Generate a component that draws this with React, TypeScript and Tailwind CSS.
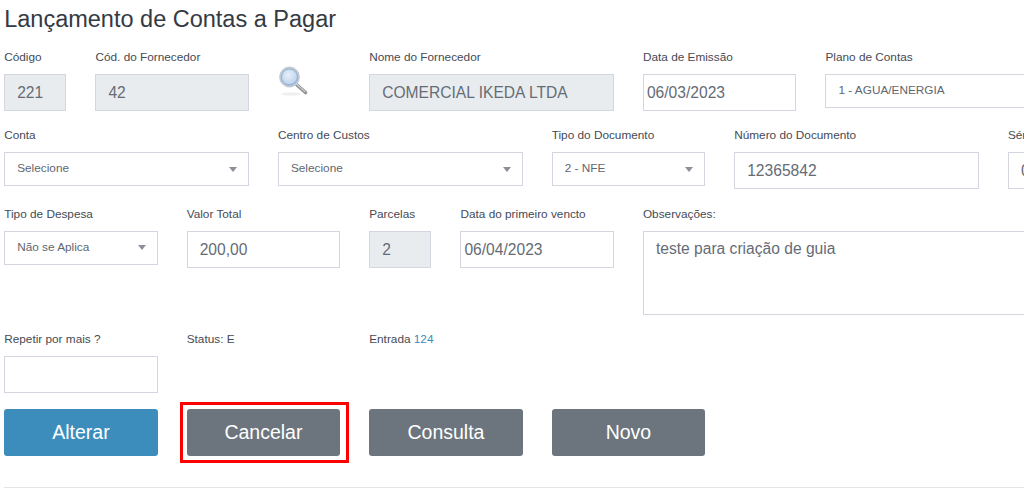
import React from "react";

const rowCls = "grid grid-cols-[repeat(14,62.25px)] gap-x-[29px]";

function Label({ children }: { children: React.ReactNode }) {
  return <div className="h-[25px] pt-[1px] text-[11.8px] leading-[14px] text-[#454a54] whitespace-nowrap">{children}</div>;
}

function Field({ value, muted, tight }: { value: string; muted?: boolean; tight?: boolean }) {
  return (
    <input
      readOnly
      value={value}
      className={`block w-full h-[37px] border border-[#d4d7e0] text-[15.6px] text-[#656c76] outline-none ${tight ? "pl-[3px]" : "pl-[12px]"} ${muted ? "bg-[#e9ecef]" : "bg-white"}`}
    />
  );
}

function Select({ value, arrow = true, tall }: { value: string; arrow?: boolean; tall?: boolean }) {
  return (
    <div className={`flex items-center justify-between ${tall ? "h-[34px]" : "h-[33.5px]"} border border-[#d4d7e0] bg-white pl-[12px] pr-[11px] text-[11.8px] text-[#5f6670]`}>
      <span className="whitespace-nowrap">{value}</span>
      {arrow && <span className="w-0 h-0 border-x-[4px] border-x-transparent border-t-[5px] border-t-[#8a8f98]" />}
    </div>
  );
}

function Magnifier() {
  return (
    <svg width="32" height="32" viewBox="0 0 32 32" className="mt-[-8px]">
      <defs>
        <radialGradient id="lens" cx="0.45" cy="0.4" r="0.6">
          <stop offset="0" stopColor="#e8f0f9" />
          <stop offset="0.7" stopColor="#c3d7ef" />
          <stop offset="1" stopColor="#9dbbe2" />
        </radialGradient>
      </defs>
      <ellipse cx="13" cy="28" rx="10" ry="1.6" fill="#efefef" />
      <path d="M19 19 L27.5 26.5" stroke="#8f9296" strokeWidth="3.6" strokeLinecap="round" />
      <path d="M18.5 18 L27 25.6" stroke="#cfd1d4" strokeWidth="1.1" strokeLinecap="round" />
      <circle cx="11.5" cy="11" r="9.5" fill="url(#lens)" stroke="#c4c9d0" strokeWidth="1.8" />
      <circle cx="11.5" cy="11" r="8" fill="none" stroke="#8badda" strokeWidth="1" />
    </svg>
  );
}

function Button({ children, blue }: { children: React.ReactNode; blue?: boolean }) {
  return (
    <button className={`block w-full h-[47px] rounded-[3px] text-[19.5px] text-white ${blue ? "bg-[#3c8dbc]" : "bg-[#6c757d]"}`}>
      {children}
    </button>
  );
}

export default function App() {
  return (
    <div className="relative w-[1024px] h-[489px] overflow-hidden bg-white pl-[4.2px] font-['Liberation_Sans',Arial,sans-serif]">
      <h1 className="h-[49px] pt-[6px] text-[23.5px] leading-[26px] text-[#333a44] whitespace-nowrap">Lançamento de Contas a Pagar</h1>

      <div className={`${rowCls} h-[78px]`}>
        <div><Label>Código</Label><Field value="221" muted /></div>
        <div className="col-span-2"><Label>Cód. do Fornecedor</Label><Field value="42" muted /></div>
        <div className="pt-[25px]"><Magnifier /></div>
        <div className="col-span-3"><Label>Nome do Fornecedor</Label><Field value="COMERCIAL IKEDA LTDA" muted /></div>
        <div className="col-span-2"><Label>Data de Emissão</Label><Field value="06/03/2023" tight /></div>
        <div className="col-span-4"><Label>Plano de Contas</Label><Select value="1 - AGUA/ENERGIA" arrow={false} /></div>
      </div>

      <div className={`${rowCls} h-[78px]`}>
        <div className="col-span-3"><Label>Conta</Label><Select value="Selecione" tall /></div>
        <div className="col-span-3"><Label>Centro de Custos</Label><Select value="Selecione" tall /></div>
        <div className="col-span-2"><Label>Tipo do Documento</Label><Select value="2 - NFE" tall /></div>
        <div className="col-span-3"><Label>Número do Documento</Label><Field value="12365842" /></div>
        <div className="col-span-2"><Label>Série</Label><Field value="0" /></div>
      </div>

      <div className={`${rowCls} h-[126px]`}>
        <div className="col-span-2"><div className="pt-[1px]"><Label>Tipo de Despesa</Label></div><Select value="Não se Aplica" /></div>
        <div className="col-span-2"><div className="pt-[1px]"><Label>Valor Total</Label></div><Field value="200,00" /></div>
        <div><div className="pt-[1px]"><Label>Parcelas</Label></div><Field value="2" muted /></div>
        <div className="col-span-2"><div className="pt-[1px]"><Label>Data do primeiro vencto</Label></div><Field value="06/04/2023" tight /></div>
        <div className="col-span-5">
          <div className="pt-[1px]"><Label>Observações:</Label></div>
          <textarea readOnly value="teste para criação de guia" className="block w-full h-[84px] border border-[#d4d7e0] bg-white pl-[12px] pt-[7px] text-[15.6px] leading-[20px] text-[#656c76] outline-none resize-none" />
        </div>
      </div>

      <div className={`${rowCls} h-[78px]`}>
        <div className="col-span-2"><Label>Repetir por mais ?</Label><Field value="" /></div>
        <div className="col-span-2"><Label>Status: E</Label></div>
        <div className="col-span-2"><Label>Entrada <span className="text-[#3c8dbc]">124</span></Label></div>
      </div>

      <div className={`${rowCls} h-[78px]`}>
        <div className="col-span-2"><Button blue>Alterar</Button></div>
        <div className="col-span-2 relative">
          <Button>Cancelar</Button>
          <div className="absolute left-[-7px] right-[-9px] top-[-7px] bottom-[24px] border-[3px] border-[#ff0000]" />
        </div>
        <div className="col-span-2"><Button>Consulta</Button></div>
        <div className="col-span-2"><Button>Novo</Button></div>
      </div>

      <hr className="border-t border-[#e4e5e9]" />
    </div>
  );
}
